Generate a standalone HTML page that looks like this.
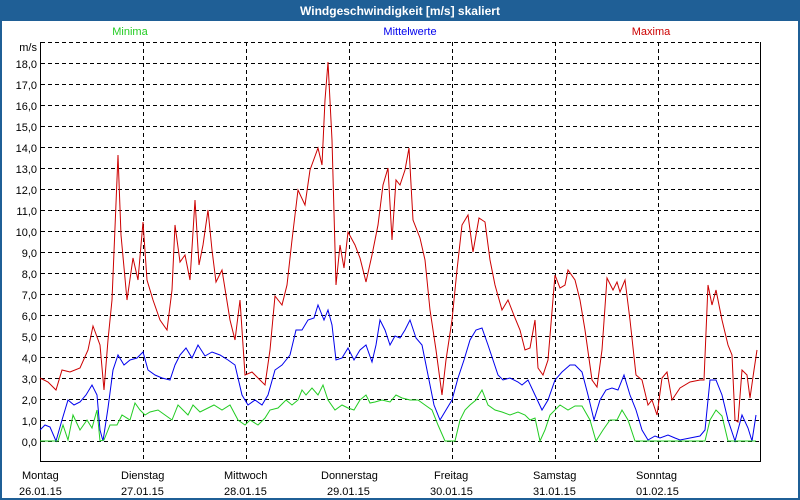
<!DOCTYPE html>
<html><head><meta charset="utf-8"><style>
html,body{margin:0;padding:0;width:800px;height:500px;overflow:hidden;background:#fff}
svg{display:block;font-family:"Liberation Sans",sans-serif}
</style></head><body>
<svg width="800" height="500" viewBox="0 0 800 500" xmlns="http://www.w3.org/2000/svg">
<rect x="0" y="0" width="800" height="500" fill="#1f5f96"/>
<rect x="2" y="21" width="796" height="477" fill="#fff"/>
<text x="400" y="15" fill="#fff" font-size="12" font-weight="bold" text-anchor="middle">Windgeschwindigkeit [m/s] skaliert</text>
<text x="130" y="35" fill="#22cc22" font-size="11" text-anchor="middle">Minima</text>
<text x="410" y="35" fill="#0000ee" font-size="11" text-anchor="middle">Mittelwerte</text>
<text x="651" y="35" fill="#cc0000" font-size="11" text-anchor="middle">Maxima</text>
<g stroke="#000" stroke-width="1" stroke-dasharray="4,3" fill="none">
<path d="M41 42.5H760M41 63.5H760M41 84.5H760M41 105.5H760M41 126.5H760M41 147.5H760M41 168.5H760M41 189.5H760M41 210.5H760M41 231.5H760M41 252.5H760M41 273.5H760M41 294.5H760M41 315.5H760M41 336.5H760M41 357.5H760M41 378.5H760M41 399.5H760M41 420.5H760M41 441.5H760"/>
<path d="M143.5 42V461M246.5 42V461M349.5 42V461M452.5 42V461M555.5 42V461M658.5 42V461"/>
</g>
<path d="M40.5 42V461.5H760.5V42" stroke="#000" fill="none"/>
<g font-size="11" fill="#000" text-anchor="end">
<text x="37" y="51">m/s</text>
<text x="37" y="68">18,0</text><text x="37" y="89">17,0</text><text x="37" y="110">16,0</text><text x="37" y="131">15,0</text><text x="37" y="152">14,0</text><text x="37" y="173">13,0</text><text x="37" y="194">12,0</text><text x="37" y="215">11,0</text><text x="37" y="236">10,0</text><text x="37" y="257">9,0</text><text x="37" y="278">8,0</text><text x="37" y="299">7,0</text><text x="37" y="320">6,0</text><text x="37" y="341">5,0</text><text x="37" y="362">4,0</text><text x="37" y="383">3,0</text><text x="37" y="404">2,0</text><text x="37" y="425">1,0</text><text x="37" y="446">0,0</text>
</g>
<g font-size="11" fill="#000">
<text x="22" y="479">Montag</text><text x="19" y="495">26.01.15</text>
<text x="121" y="479">Dienstag</text><text x="121" y="495">27.01.15</text>
<text x="224" y="479">Mittwoch</text><text x="224" y="495">28.01.15</text>
<text x="321" y="479">Donnerstag</text><text x="327" y="495">29.01.15</text>
<text x="434" y="479">Freitag</text><text x="430" y="495">30.01.15</text>
<text x="533" y="479">Samstag</text><text x="533" y="495">31.01.15</text>
<text x="636" y="479">Sonntag</text><text x="636" y="495">01.02.15</text>
</g>
<polyline fill="none" stroke="#cc0000" stroke-width="1" points="40,378 48,382 56,390 62,370 70,372 80,368 88,350 93,326 100,345 104,390 108,340 112,300 118,155 121,235 127,300 133,258 138,280 143,222 147,280 153,300 160,320 167,330 172,290 175,225 180,262 185,255 190,280 195,200 199,265 203,245 208,210 212,250 216,282 222,270 230,320 235,340 240,300 245,375 252,372 258,378 265,385 270,350 275,296 282,305 287,285 292,240 298,190 305,205 310,170 318,148 322,165 325,100 328,62 332,140 336,285 340,245 344,268 348,232 355,245 360,258 366,282 372,255 378,225 383,185 388,168 392,240 396,180 400,185 405,170 409,148 413,220 420,238 425,260 430,310 436,350 442,395 446,360 452,320 457,270 462,225 468,215 473,252 479,218 485,222 490,260 495,285 502,310 508,300 515,318 520,330 525,350 530,348 535,320 538,368 543,375 548,360 555,275 560,288 565,285 568,270 575,280 580,300 585,330 592,380 597,387 602,350 607,278 613,290 617,282 620,292 625,280 630,320 636,375 642,380 648,405 652,400 657,415 662,378 667,372 672,400 680,388 690,382 700,380 704,380 708,285 712,305 716,290 722,320 728,345 732,355 735,420 738,422 742,370 747,375 750,398 754,370 757,350"/>
<polyline fill="none" stroke="#0000ee" stroke-width="1" points="40,430 45,425 50,427 56,441 62,420 68,400 74,405 80,402 86,395 92,385 97,395 100,430 103,441 108,408 113,370 118,355 124,365 130,360 137,358 143,352 148,370 155,375 162,378 170,380 175,365 180,355 186,348 192,358 198,345 205,356 212,352 220,355 228,360 235,365 242,395 248,405 255,400 262,405 268,395 275,370 282,365 290,355 296,330 302,330 308,320 314,318 318,305 324,320 328,310 332,325 336,360 342,358 348,348 354,360 360,350 366,345 372,362 376,345 380,320 385,330 390,345 395,336 400,338 405,330 410,320 416,338 422,345 428,375 434,405 440,420 446,410 452,400 458,378 464,360 470,340 476,330 482,328 488,345 493,360 498,375 503,380 510,378 518,382 522,385 528,380 535,395 542,410 548,400 555,380 562,372 570,365 575,365 582,372 588,395 594,420 600,400 606,390 612,388 618,390 624,375 630,395 636,410 642,430 648,440 655,436 660,438 668,435 675,438 680,440 690,438 700,436 705,430 710,380 716,380 722,395 728,420 735,441 742,415 748,428 752,441 756,415"/>
<polyline fill="none" stroke="#22cc22" stroke-width="1" points="40,441 50,441 58,441 63,425 68,440 73,415 80,430 87,420 92,428 97,410 100,441 104,440 110,425 117,425 122,415 130,420 135,403 140,410 145,415 150,412 158,410 165,415 172,420 178,405 183,410 188,415 193,405 200,412 208,408 214,405 222,410 230,405 238,420 245,425 250,420 258,425 265,418 270,410 278,408 286,400 292,405 298,400 302,390 306,395 312,388 318,395 323,385 328,400 335,410 342,405 348,408 354,410 360,400 366,395 370,403 375,402 382,400 390,402 396,395 402,398 410,400 418,400 425,405 432,410 438,425 445,441 455,441 460,420 465,410 470,405 476,400 482,390 488,405 495,410 502,412 510,415 518,412 525,415 530,420 535,418 540,441 545,430 550,415 555,410 560,405 568,410 575,406 582,406 590,420 596,441 603,430 610,420 617,420 622,410 628,420 635,441 645,441 700,441 705,441 710,420 716,410 722,416 728,441 740,441 756,441"/>
</svg>
</body></html>
